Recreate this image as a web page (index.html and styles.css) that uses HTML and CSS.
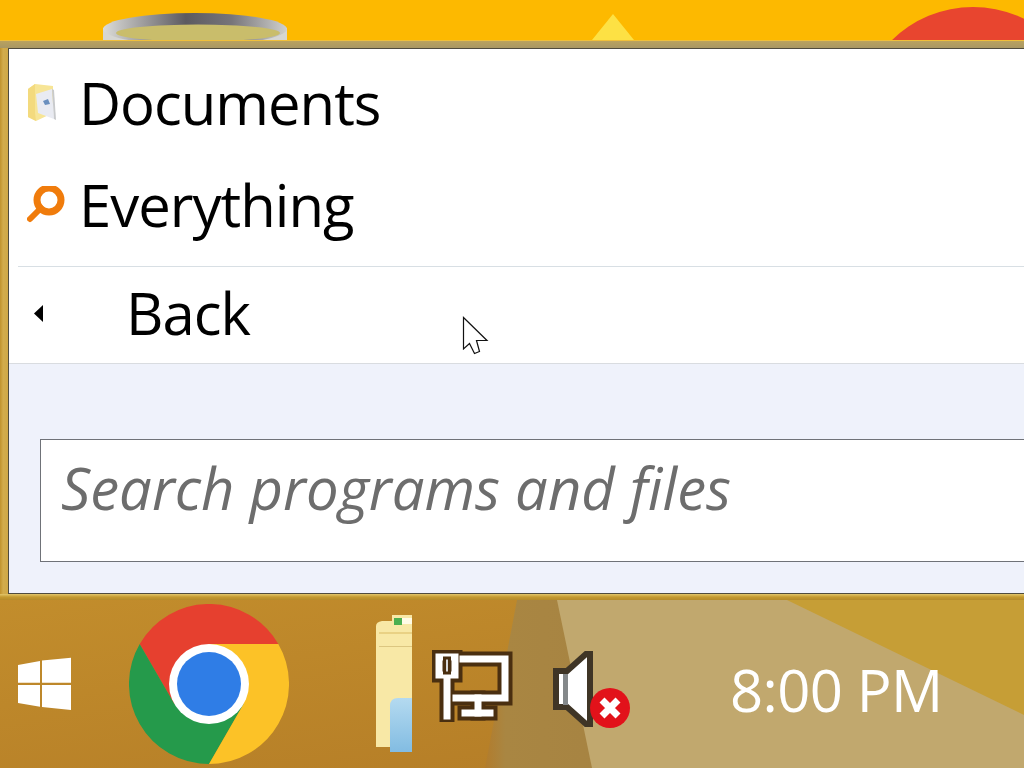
FILE: index.html
```html
<!DOCTYPE html>
<html>

	<head lang="en">
		<meta charset="UTF-8">
		<title>Start menu</title>
		<link rel="stylesheet" href="styles.css">
	</head>

	<body>
		<div class="desktop">
			<!-- wallpaper, bits of it show above the menu and behind the taskbar -->
			<svg class="wallpaper" width="1024" height="768" viewBox="0 0 1024 768">
				<defs>
					<linearGradient id="rim" x1="0" x2="1" y1="0" y2="0">
						<stop offset="0" stop-color="#dcdcd8"/>
						<stop offset="0.45" stop-color="#5c5a60"/>
						<stop offset="0.7" stop-color="#77757a"/>
						<stop offset="1" stop-color="#d0d0cc"/>
					</linearGradient>
					<linearGradient id="bar" x1="0" x2="1" y1="0" y2="1">
						<stop offset="0" stop-color="#c28d2c"/>
						<stop offset="1" stop-color="#b27a26"/>
					</linearGradient>
					<linearGradient id="band" x1="0" x2="1" y1="0" y2="0">
						<stop offset="0" stop-color="#b27c2c"/>
						<stop offset="0.15" stop-color="#a98642"/>
						<stop offset="1" stop-color="#a68342"/>
					</linearGradient>
					<linearGradient id="glass" x1="0" x2="0" y1="0" y2="1">
						<stop offset="0" stop-color="#b4daf0"/>
						<stop offset="1" stop-color="#82bce2"/>
					</linearGradient>
				</defs>
				<rect width="1024" height="600" fill="#fdb900"/>
				<rect y="600" width="1024" height="168" fill="url(#bar)"/>
				<polygon points="517,600 620,600 620,768 485,768" fill="url(#band)"/>
				<polygon points="557,600 1024,600 1024,768 592,768" fill="#c1a86e"/>
				<polygon points="787,600 1024,600 1024,715" fill="#c69e36"/>
				<rect x="103" y="28" width="184" height="12" fill="#d6d6d2"/>
				<ellipse cx="195" cy="29" rx="92" ry="16" fill="url(#rim)"/>
				<ellipse cx="198" cy="33" rx="82" ry="8.5" fill="#c9bd6b"/>
				<polygon points="613,14 592,40 634,40" fill="#fde144"/>
				<circle cx="973" cy="123" r="116" fill="#e8452f"/>
			</svg>

			<div class="start-menu">
				<div class="menu-panel">
					<ul class="menu-list">
						<li class="menu-row">
							<span class="menu-icon">
								<svg width="34" height="40" viewBox="0 0 34 40">
									<path d="M1 6 L8 1 L26 3 V30 L9 38 L1 34 Z" fill="#f7e596"/>
									<path d="M1 6 L8 1 V30 L9 38 L1 34 Z" fill="#f3da7e"/>
									<path d="M9 11 L25 6 L27 36 L11 30 Z" fill="#e9ebf2"/>
									<path d="M16 18 L21 16 L23 21 L18 22 Z" fill="#6a8fbe"/>
									<path d="M25 6 L27 7 L29 37 L27 36 Z" fill="#c8cacc"/>
								</svg>
							</span>
							<span class="menu-label">Documents</span>
						</li>
						<li class="menu-row">
							<span class="menu-icon">
								<svg width="38" height="38" viewBox="0 0 38 38">
									<path d="M3 33 L14 22" class="lens-handle"/>
									<circle cx="22" cy="14" r="12" class="lens-ring"/>
								</svg>
							</span>
							<span class="menu-label">Everything</span>
						</li>
					</ul>
					<div class="back-row">
						<svg class="back-arrow" width="9" height="17" viewBox="0 0 9 17">
							<polygon points="9,0 9,17 0,8.5"/>
						</svg>
						<span class="menu-label">Back</span>
					</div>
					<div class="search-area">
						<div class="search-box">Search programs and files</div>
					</div>
				</div>
			</div>

			<div class="taskbar">
				<svg class="start-logo" width="55" height="54" viewBox="0 0 55 54">
					<polygon points="1,8 23,4 23,25.7 1,25.7"/>
					<polygon points="25,3.5 54,0.7 54,25.7 25,25.7"/>
					<polygon points="1,28 23,28 23,49.7 1,46"/>
					<polygon points="25,28 54,28 54,53 25,50"/>
				</svg>

				<svg class="chrome-logo" width="160" height="160" viewBox="0 0 160 160">
					<path d="M80 40 H149.3 A80 80 0 0 0 10.7 40 L45.4 100 Z" fill="#e6402f"/>
					<path d="M10.7 40 A80 80 0 0 0 80 160 L114.6 100 L45.4 100 Z" fill="#259a4b"/>
					<path d="M149.3 40 A80 80 0 0 1 80 160 L114.6 100 L80 40 Z" fill="#fcc227"/>
					<circle cx="80" cy="80" r="40" fill="#fff"/>
					<circle cx="80" cy="80" r="32" fill="#2f7de6"/>
				</svg>

				<svg class="folder-btn" width="36" height="138" viewBox="0 0 36 138">
					<path d="M0 12 Q0 8 6 7 H16 V1 H36 V133 H0 Z" fill="#f8e8a6"/>
					<rect x="18" y="4" width="8" height="7" fill="#4caf50"/>
					<rect x="26" y="4" width="10" height="6" fill="#fffbe6"/>
					<rect x="3" y="18" width="33" height="2" fill="#e9d184"/>
					<rect x="3" y="32" width="33" height="1" fill="#dcc680"/>
					<path d="M14 138 V92 Q14 84 22 84 H36 V138 Z" fill="url(#glass)"/>
				</svg>

				<svg class="net-icon" width="82" height="72" viewBox="0 0 82 72">
					<g class="net-outline">
						<path d="M31 9 H73 V48 H24"/>
						<path d="M46 48 V63"/>
						<path d="M33 63 H58"/>
						<path d="M15 25 V66"/>
						<rect x="7" y="7" width="16" height="18"/>
					</g>
					<g class="net-core">
						<path d="M31 9 H73 V48 H24"/>
						<path d="M46 48 V63"/>
						<path d="M33 63 H58"/>
						<path d="M15 25 V66"/>
						<rect x="7" y="7" width="16" height="18"/>
					</g>
					<rect class="net-slot" x="12.5" y="8" width="5" height="15"/>
				</svg>

				<svg class="sound-icon" width="78" height="78" viewBox="0 0 78 78">
					<path class="sound-cone" d="M3 21 H14 L33 4 H37 V74 H33 L14 57 H3 Z"/>
					<rect x="10" y="24" width="5" height="31" fill="#84888a"/>
					<circle cx="57" cy="58" r="20" fill="#e2121a"/>
					<path class="sound-x" d="M49 50 L65 66 M65 50 L49 66"/>
				</svg>

				<div class="clock">8:00 PM</div>
			</div>

			<svg class="cursor" width="27" height="40" viewBox="0 0 27 40">
				<path d="M1.5 1.5 V33 L7.5 27.5 L12.5 37.5 L17.5 35.5 L14.5 24.5 H25 Z" fill="#fff" stroke="#111" stroke-width="1.2"/>
			</svg>
		</div>
	</body>

</html>
```

FILE: styles.css
```css
* {
	margin: 0;
	padding: 0;
	box-sizing: border-box;
}

body {
	background: #fdb900;
	font-family: "Open Sans", "Liberation Sans", sans-serif;
	overflow: hidden;
}

ul {
	list-style: none;
}

.desktop {
	position: relative;
	width: 1024px;
	height: 768px;
	overflow: hidden;
	padding-top: 40px;
}

.wallpaper {
	position: absolute;
	left: 0;
	top: 0;
}

.cursor {
	position: absolute;
	left: 462px;
	top: 316px;
}

/* menu runs off the right edge of the shot */
.start-menu {
	position: relative;
	width: 1060px;
	height: 560px;
	padding: 7px 0 6px 8px;
	border-top: 1px solid #efbf3a;
	background:
		linear-gradient(#b9a25f, #a99763) top left / 100% 7px no-repeat,
		linear-gradient(#e2c66a, #c49a30 50%, #b48a2a) bottom left / 100% 6px no-repeat,
		linear-gradient(90deg, #c0922c, #d2ac4c 40%, #cfa846) left top / 8px 100% no-repeat;
}

.menu-panel {
	height: 100%;
	border: 1px solid #4f4b3e;
	background: #fff;
	display: flex;
	flex-direction: column;
}

.menu-list {
	padding-top: 5px;
	padding-bottom: 8px;
	margin-left: 9px;
	border-bottom: 1px solid #d8dfe4;
}

.menu-row {
	display: flex;
	align-items: center;
	height: 102px;
	padding-left: 9px;
	padding-bottom: 4px;
}

.menu-icon {
	display: flex;
	width: 52px;
}

.menu-label {
	font-size: 58px;
	line-height: 70px;
	letter-spacing: -1px;
	color: #000;
}

.lens-ring {
	fill: none;
	stroke: #f07c0c;
	stroke-width: 7;
}

.lens-handle {
	fill: none;
	stroke: #f07c0c;
	stroke-width: 6;
	stroke-linecap: round;
}

.back-row {
	display: flex;
	align-items: center;
	height: 97px;
	padding-left: 25px;
	padding-bottom: 4px;
	border-bottom: 1px solid #d9dce0;
}

.back-arrow {
	margin-right: 83px;
	fill: #000;
}

.search-area {
	flex: 1;
	background: #eff2fb;
	padding: 75px 0 0 31px;
}

.search-box {
	height: 123px;
	border: 1px solid #6f7278;
	background: #fff;
	padding: 0 0 27px 20px;
	display: flex;
	align-items: center;
	font-size: 58px;
	font-style: italic;
	color: #6d6d6d;
}

.taskbar {
	position: relative;
	display: flex;
	align-items: flex-start;
	height: 168px;
}

.start-logo {
	margin: 57px 0 0 17px;
	fill: #fff;
}

.chrome-logo {
	margin: 4px 0 0 57px;
}

.folder-btn {
	margin: 14px 0 0 87px;
}

.net-icon {
	margin: 50px 0 0 20px;
}

.net-outline,
.net-core {
	fill: none;
	stroke-linecap: square;
}

.net-outline {
	stroke: #4a2f10;
	stroke-width: 15;
}

.net-core {
	stroke: #fff;
	stroke-width: 7;
}

.net-slot {
	fill: #d8d8d8;
	stroke: #4a2f10;
	stroke-width: 3;
}

.sound-icon {
	margin: 50px 0 0 39px;
}

.sound-cone {
	fill: #fff;
	stroke: #3f3526;
	stroke-width: 6;
}

.sound-x {
	fill: none;
	stroke: #fff;
	stroke-width: 7;
}

.clock {
	margin: 50px 0 0 99px;
	font-size: 58px;
	line-height: 80px;
	letter-spacing: -0.6px;
	color: #fff;
	white-space: nowrap;
}
```
